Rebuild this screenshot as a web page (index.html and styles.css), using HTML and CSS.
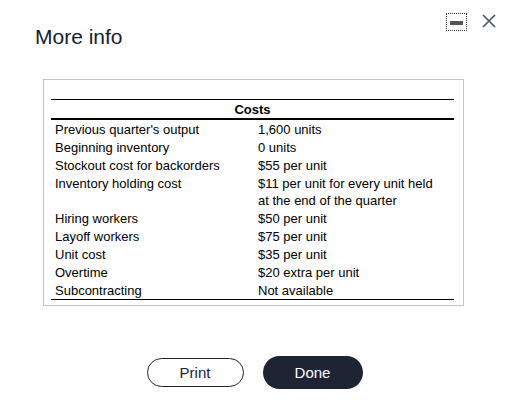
FILE: index.html
```html
<!DOCTYPE html>
<html lang="en">
<head>
<meta charset="utf-8">
<title>More info</title>
<link rel="stylesheet" href="styles.css">
</head>
<body>
<div class="dialog">
  <header class="header">
    <h1 class="title">More info</h1>
    <div class="controls">
      <button class="min-btn" aria-label="Minimize"><span class="min-bar"></span></button>
      <button class="close-btn" aria-label="Close">
        <svg width="14" height="14" viewBox="0 0 14 14"><path d="M1 1 L13 13 M13 1 L1 13" stroke="#4b5663" stroke-width="1.7" fill="none"/></svg>
      </button>
    </div>
  </header>
  <section class="info-box">
    <table class="costs">
      <colgroup><col class="col-label"><col class="col-value"></colgroup>
      <thead>
        <tr><th colspan="2" class="head">Costs</th></tr>
      </thead>
      <tbody>
        <tr><td>Previous quarter's output</td><td>1,600 units</td></tr>
        <tr><td>Beginning inventory</td><td>0 units</td></tr>
        <tr><td>Stockout cost for backorders</td><td>$55 per unit</td></tr>
        <tr><td>Inventory holding cost</td><td>$11 per unit for every unit held<br>at the end of the quarter</td></tr>
        <tr><td>Hiring workers</td><td>$50 per unit</td></tr>
        <tr><td>Layoff workers</td><td>$75 per unit</td></tr>
        <tr><td>Unit cost</td><td>$35 per unit</td></tr>
        <tr><td>Overtime</td><td>$20 extra per unit</td></tr>
        <tr class="last"><td>Subcontracting</td><td>Not available</td></tr>
      </tbody>
    </table>
  </section>
  <div class="actions">
    <button class="btn btn-print">Print</button>
    <button class="btn btn-done">Done</button>
  </div>
</div>
</body>
</html>
```
FILE: styles.css
```css
* { box-sizing: border-box; }
html, body {
  margin: 0;
  padding: 0;
  background: #ffffff;
}
body {
  width: 509px;
  height: 415px;
  font-family: "Liberation Sans", Arial, sans-serif;
  color: #000;
}
.header {
  display: flex;
  justify-content: space-between;
  align-items: flex-start;
  padding: 13px 13px 0 35px;
}
.title {
  margin: 12px 0 0 0;
  font-size: 21px;
  line-height: 24px;
  font-weight: normal;
  color: #161b30;
}
.controls {
  display: flex;
  align-items: flex-start;
  gap: 15px;
}
.min-btn {
  width: 21px;
  height: 18px;
  padding: 0;
  margin: 0;
  border: 1px dotted #333;
  background: transparent;
  display: flex;
  align-items: center;
  justify-content: center;
}
.min-bar {
  display: block;
  width: 13px;
  height: 4px;
  background: #555;
  margin-top: 2px;
}
.close-btn {
  width: 14px;
  height: 14px;
  padding: 0;
  margin: 1px 0 0 0;
  border: 0;
  background: transparent;
  display: block;
}
.close-btn svg { display: block; }
.info-box {
  margin: 30px 0 0 43px;
  width: 421px;
  border: 1px solid #c4c4c4;
  padding: 19px 9px 5px 7px;
}
.costs {
  width: 403px;
  table-layout: fixed;
  border-collapse: separate;
  border-spacing: 0;
  font-size: 13px;
  line-height: 17px;
}
.col-label { width: 203px; }
.col-value { width: 200px; }
.costs th, .costs td {
  padding: 1px 4px 0 4px;
  text-align: left;
  vertical-align: top;
  font-weight: normal;
}
.costs .head {
  text-align: center;
  font-weight: bold;
  border-top: 1px solid #000;
  border-bottom: 2px solid #000;
}
.costs .last td {
  border-bottom: 1px solid #000;
}
.actions {
  display: flex;
  justify-content: center;
  align-items: center;
  gap: 19px;
  margin-top: 50px;
}
.btn {
  font-family: "Liberation Sans", Arial, sans-serif;
  font-size: 15px;
  border-radius: 17px;
  padding: 0;
  margin: 0;
}
.btn-print {
  width: 97px;
  height: 29px;
  background: #fff;
  color: #1e2332;
  border: 1.5px solid #1e2332;
}
.btn-done {
  width: 100px;
  height: 33px;
  background: #1e2433;
  color: #fff;
  border: 0;
}
```
